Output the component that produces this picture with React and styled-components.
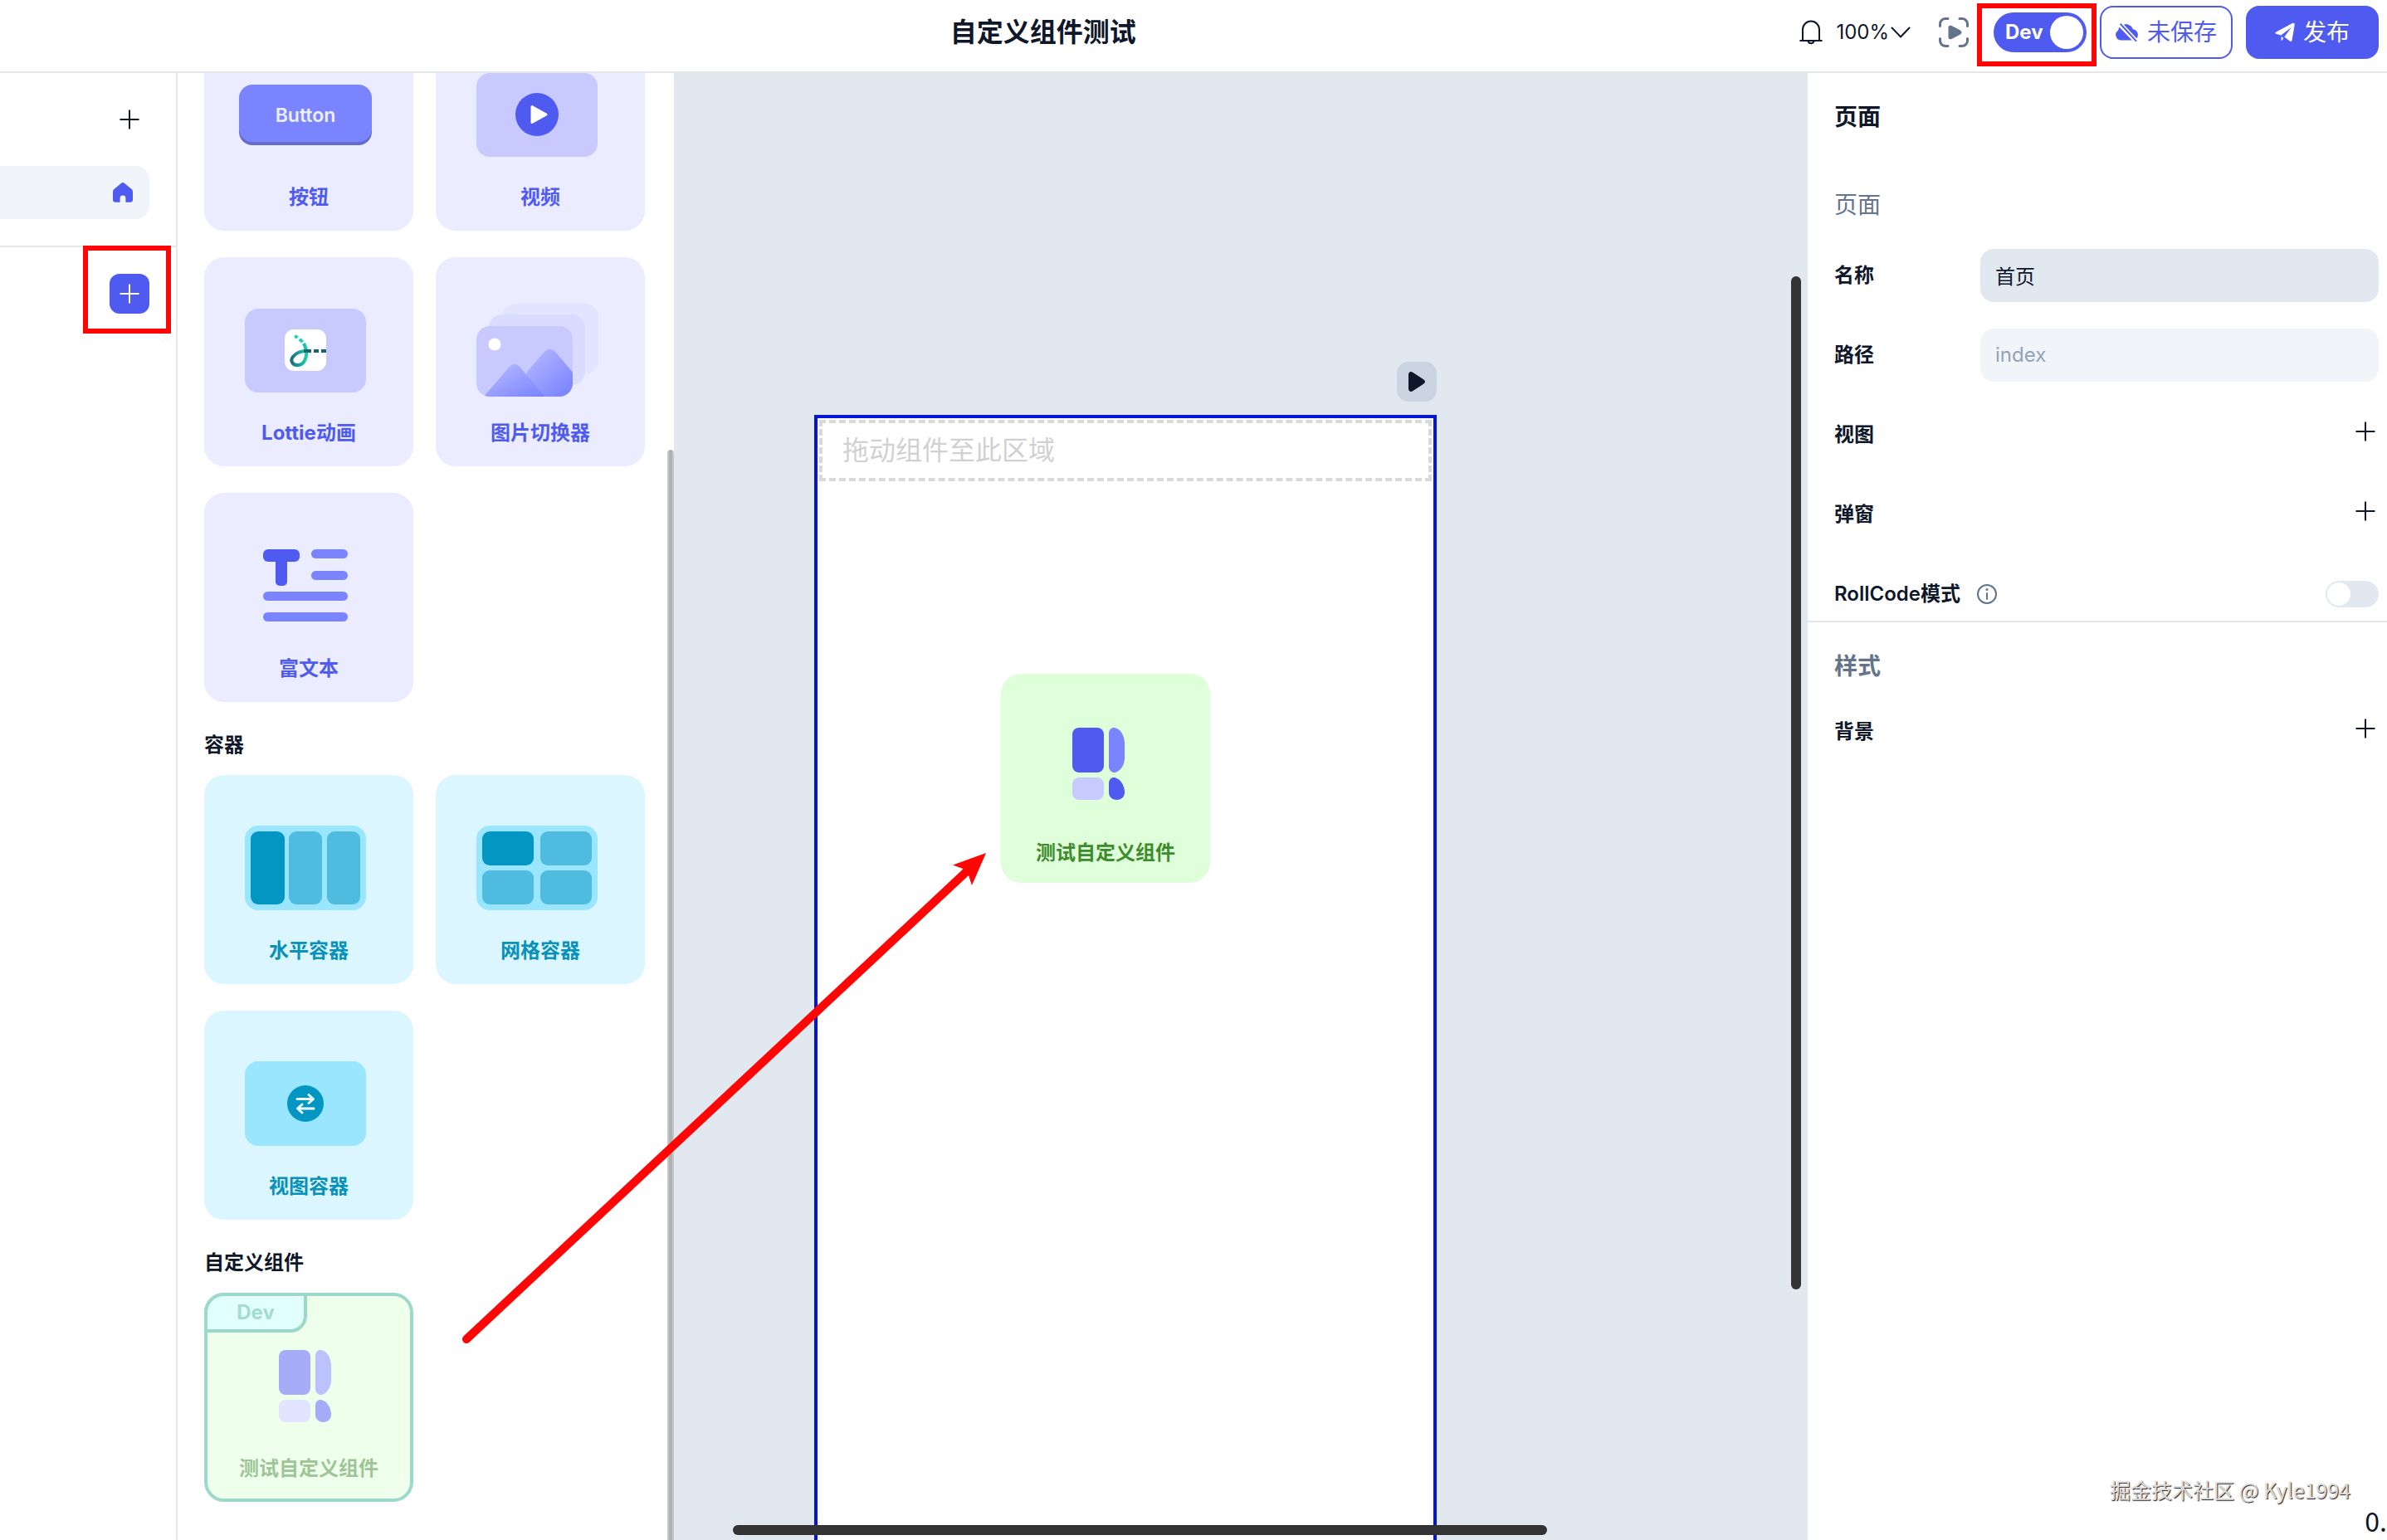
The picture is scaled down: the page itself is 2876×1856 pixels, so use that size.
import React, { useState } from "react";
import styled, { createGlobalStyle, css } from "styled-components";

const GlobalStyle = createGlobalStyle`
  *, *::before, *::after {
    box-sizing: border-box;
  }

  body {
    margin: 0;
    color: #0f172a;
    background: #fff;
    font-family: Inter, "Noto Sans CJK SC", sans-serif;
    font-size: 24px;
    line-height: 32px;
  }

  button, input {
    margin: 0;
    padding: 0;
    border: 0;
    color: inherit;
    font: inherit;
  }

  button {
    cursor: pointer;
  }

  h1, h2, h3 {
    margin: 0;
  }

  svg {
    display: block;
    flex: none;
  }
`;

const tones = {
  basic: { background: "#ebecff", color: "#4f5bf0" },
  container: { background: "#dbf6fe", color: "#0891b9" },
  custom: { background: "#dfffda", color: "#3e8c2e" },
};

/* ---------- icons ---------- */

const PlusIcon = () => (
  <svg width="24" height="24" viewBox="0 0 24 24" stroke="currentColor" strokeWidth="2" aria-hidden="true">
    <path d="M12 0.5V23.5M0.5 12H23.5" />
  </svg>
);

const HomeIcon = () => (
  <svg width="24" height="24" viewBox="0 0 24 24" fill="currentColor" aria-hidden="true">
    <path d="M10.2 0.8a2.8 2.8 0 0 1 3.6 0l8.800 7.300A3.600 3.600 0 0 1 24 10.900V20.500a3.200 3.200 0 0 1-3.200 3.200H15.400V18.800a3.400 3.400 0 0 0-6.800 0v4.900H3.200A3.200 3.200 0 0 1 0 20.500V10.900a3.600 3.600 0 0 1 1.400-2.800z" />
  </svg>
);

const BellIcon = () => (
  <svg width="28" height="30" viewBox="0 0 28 30" fill="none" stroke="currentColor" strokeWidth="2" strokeLinecap="round" aria-hidden="true">
    <path d="M1.200 25H26.800M4 25V11.500a10 10 0 0 1 20 0V25M10.500 25.500a3.600 3.600 0 0 0 7 0" />
  </svg>
);

const ChevronIcon = () => (
  <svg width="24" height="14" viewBox="0 0 24 14" fill="none" stroke="currentColor" strokeWidth="2" strokeLinecap="round" strokeLinejoin="round" aria-hidden="true">
    <path d="M1.500 1.500L12 12.500L22.500 1.500" />
  </svg>
);

const ScanIcon = () => (
  <svg width="36" height="36" viewBox="0 0 36 36" fill="none" stroke="#64748b" strokeWidth="3" strokeLinecap="round" aria-hidden="true">
    <path d="M1.500 10.500V8a6.500 6.500 0 0 1 6.500-6.500H11M25 1.500H28A6.500 6.500 0 0 1 34.500 8V10.500M34.500 25.500V28A6.500 6.500 0 0 1 28 34.500H25M11 34.500H8A6.500 6.500 0 0 1 1.500 28V25.500" />
    <path d="M12.500 12.500Q12.500 10 15 11L25.500 16.500Q27.500 18 25.500 19.500L15 25Q12.500 26 12.500 23.500Z" fill="#64748b" strokeWidth="2" strokeLinejoin="round" />
  </svg>
);

const CloudOffIcon = () => (
  <svg width="28" height="24" viewBox="0 0 28 24" fill="currentColor" aria-hidden="true">
    <path d="M4.600 5.800L19.800 21.500H7.200A6.600 6.600 0 0 1 3.200 9.400A9 9 0 0 1 4.600 5.800Z" />
    <path d="M7.800 3.400A8.800 8.800 0 0 1 20.800 8.200A6.800 6.800 0 0 1 25 19.600Z" />
    <path d="M6.200 2.200L24.500 22" fill="none" stroke="currentColor" strokeWidth="2" strokeLinecap="round" />
    <path d="M7.600 1.200L26 21" fill="none" stroke="#fff" strokeWidth="1.500" />
  </svg>
);

const PlaneIcon = () => (
  <svg width="24" height="24" viewBox="0 0 24 24" fill="currentColor" aria-hidden="true">
    <path d="M1 11.800L21 1.100C22.600 0.300 24 1.200 23.700 2.900L20.600 21.300C20.300 23 19.200 23.400 17.900 22.400L11.300 17.600L20 5.800L7.400 15.600L1.200 13.700C0 13.300 0 12.400 1 11.800Z" />
    <path d="M7.600 16.900L10.300 18.900L8.600 21.600C8 22.300 7.600 22 7.600 21.200Z" />
  </svg>
);

const InfoIcon = () => (
  <svg width="24" height="24" viewBox="0 0 24 24" fill="none" stroke="#64748b" strokeWidth="2" strokeLinecap="round" aria-hidden="true">
    <circle cx="12" cy="12" r="11" />
    <path d="M12 11V18" />
    <circle cx="12" cy="6.500" r="0.600" />
  </svg>
);

const PlayIcon = () => (
  <svg width="22" height="26" viewBox="0 0 22 26" fill="currentColor" aria-hidden="true">
    <path d="M1 5C1 1.500 3.500 0 6.500 2L19.500 10.500Q22.500 13 19.500 15.500L6.500 24C3.500 26 1 24.500 1 21Z" />
  </svg>
);

/* ---------- component illustrations ---------- */

const Art = ({ children }) => (
  <svg width="168" height="128" viewBox="0 0 168 128" aria-hidden="true">
    {children}
  </svg>
);

const ButtonArt = () => (
  <Art>
    <rect x="0" y="32" width="160" height="69" rx="16" fill="#666bcf" />
    <rect x="0" y="28" width="160" height="69" rx="16" fill="#7b84ff" />
    <text x="80" y="73" textAnchor="middle" fontFamily="Inter, sans-serif" fontSize="23" fontWeight="600" fill="#eceeff">Button</text>
  </Art>
);

const VideoArt = () => (
  <Art>
    <rect x="7" y="14" width="146" height="101" rx="16" fill="#c8caff" />
    <circle cx="80" cy="64" r="26" fill="#4f5bf0" />
    <path d="M74 54.500L91 64L74 73.500Z" fill="#fff" stroke="#fff" strokeWidth="3" strokeLinejoin="round" />
  </Art>
);

const LottieArt = () => (
  <Art>
    <defs>
      <linearGradient id="lottieLoop" x1="0" y1="0" x2="1" y2="0">
        <stop offset="0" stopColor="#1b6f80" />
        <stop offset="1" stopColor="#16d0b0" />
      </linearGradient>
    </defs>
    <rect x="7" y="14" width="146" height="101" rx="16" fill="#c8caff" />
    <rect x="55" y="39" width="50" height="50" rx="11" fill="#fff" />
    <path d="M67 47C72 49 77 54 79 58" fill="none" stroke="#1fd0b4" strokeWidth="4" strokeDasharray="4 3 5 2" />
    <path d="M79 58C84 68 80 81 72 82C65 83 61 77 65 72C69 67 74 65 81 65" fill="none" stroke="url(#lottieLoop)" strokeWidth="4" strokeLinecap="round" />
    <path d="M78 65H105" fill="none" stroke="#1b6370" strokeWidth="4" strokeDasharray="9 3 6 3" />
  </Art>
);

const CarouselArt = () => (
  <Art>
    <defs>
      <linearGradient id="hill" x1="0" y1="0" x2="1" y2="1">
        <stop offset="0" stopColor="#bcc0ff" />
        <stop offset="1" stopColor="#757eff" />
      </linearGradient>
      <clipPath id="frontFrame">
        <rect x="7" y="35" width="116" height="85" rx="16" />
      </clipPath>
    </defs>
    <rect x="38" y="8" width="116" height="85" rx="16" fill="#e3e4ff" />
    <rect x="22" y="21" width="116" height="85" rx="16" fill="#d9dbff" />
    <rect x="7" y="35" width="116" height="85" rx="16" fill="#c8caff" />
    <g clipPath="url(#frontFrame)">
      <path d="M60 120L68 90L88 67Q96 59 103 67L124 92V120Z" fill="url(#hill)" />
      <path d="M14 122L46 85Q53 77 60 85L91 122Z" fill="url(#hill)" />
    </g>
    <circle cx="29" cy="57" r="7.500" fill="#fff" />
  </Art>
);

const RichTextArt = () => (
  <Art>
    <g fill="#4f5bf0">
      <rect x="29" y="20" width="44" height="15" rx="6" />
      <path d="M44 30H58V59a5 5 0 0 1-5 5h-4a5 5 0 0 1-5-5Z" />
    </g>
    <g fill="#7b84ff">
      <rect x="87" y="20" width="44" height="11" rx="5.500" />
      <rect x="87" y="46" width="44" height="11" rx="5.500" />
      <rect x="29" y="71" width="102" height="11" rx="5.500" />
      <rect x="29" y="96" width="102" height="11" rx="5.500" />
    </g>
  </Art>
);

const ColumnsArt = () => (
  <Art>
    <rect x="7" y="13" width="146" height="102" rx="16" fill="#9ae6ff" />
    <rect x="14" y="20" width="41" height="88" rx="9" fill="#0496c2" />
    <rect x="60" y="20" width="40" height="88" rx="9" fill="#4ebbdf" />
    <rect x="106" y="20" width="40" height="88" rx="9" fill="#4ebbdf" />
  </Art>
);

const GridArt = () => (
  <Art>
    <rect x="7" y="13" width="146" height="102" rx="16" fill="#9ae6ff" />
    <rect x="14" y="20" width="62" height="41" rx="9" fill="#0496c2" />
    <rect x="84" y="20" width="62" height="41" rx="9" fill="#4ebbdf" />
    <rect x="14" y="67" width="62" height="41" rx="9" fill="#4ebbdf" />
    <rect x="84" y="67" width="62" height="41" rx="9" fill="#4ebbdf" />
  </Art>
);

const ViewArt = () => (
  <Art>
    <rect x="7" y="13" width="146" height="102" rx="16" fill="#9ae6ff" />
    <circle cx="80" cy="64" r="22" fill="#0496c2" />
    <path d="M70 58.500H89M84 53.500L89.500 58.500L84 63.500M90 70H71M76 65L70.500 70L76 75" fill="none" stroke="#e9fbff" strokeWidth="3" strokeLinecap="round" strokeLinejoin="round" />
  </Art>
);

const CustomArt = ({ width = 168 }) => (
  <svg width={width} height="128" viewBox={`0 0 ${width} 128`} aria-hidden="true">
    <rect x="48" y="21" width="38" height="54" rx="8" fill="#4f5bf0" />
    <rect x="48" y="81" width="38" height="27" rx="8" fill="#c8caff" />
    <path d="M92 28C92 23 95.500 20.500 99 21C107 22.500 111 32 111 41V57C111 66 106 73.500 99.500 75C95.500 75.500 92 72 92 68Z" fill="#7b84ff" />
    <path d="M92 88C92 83 95.500 80.500 99 81C106 82.500 111 91 111 98.500C111 104.500 107 108 101.500 108C96 108 92 104.500 92 99Z" fill="#4f5bf0" />
  </svg>
);

const basicItems = [
  { name: "按钮", art: ButtonArt },
  { name: "视频", art: VideoArt },
  { name: "Lottie动画", art: LottieArt },
  { name: "图片切换器", art: CarouselArt },
  { name: "富文本", art: RichTextArt },
];

const containerItems = [
  { name: "水平容器", art: ColumnsArt },
  { name: "网格容器", art: GridArt },
  { name: "视图容器", art: ViewArt },
];

const ComponentCard = ({ item, tone }) => {
  const Illustration = item.art;

  return (
    <Card type="button" $tone={tone}>
      <Illustration />
      <span>{item.name}</span>
    </Card>
  );
};

const TopBar = () => {
  const [dev, setDev] = useState(true);

  return (
    <Header>
      <Title>自定义组件测试</Title>
      <Actions>
        <PlainButton type="button" aria-label="通知">
          <BellIcon />
        </PlainButton>
        <ZoomButton type="button">
          100%
          <ChevronIcon />
        </ZoomButton>
        <PlainButton type="button" aria-label="预览">
          <ScanIcon />
        </PlainButton>
        <DevSwitch $on={dev}>
          <HiddenCheck type="checkbox" checked={dev} onChange={() => setDev(!dev)} />
          <span>Dev</span>
          <Knob />
        </DevSwitch>
        <ActionButton type="button">
          <CloudOffIcon />
          未保存
        </ActionButton>
        <ActionButton type="button" $primary>
          <PlaneIcon />
          发布
        </ActionButton>
      </Actions>
    </Header>
  );
};

const PageList = () => (
  <Rail>
    <RailSection $divided>
      <IconButton type="button" aria-label="新增页面">
        <PlusIcon />
      </IconButton>
      <HomeRow type="button" aria-label="首页">
        <HomeIcon />
      </HomeRow>
    </RailSection>
    <RailSection>
      <IconButton type="button" $primary aria-label="新增组件">
        <PlusIcon />
      </IconButton>
    </RailSection>
  </Rail>
);

const Library = () => (
  <LibraryPanel>
    <LibraryContent>
      <CardGrid>
        {basicItems.map((item) => (
          <ComponentCard key={item.name} item={item} tone="basic" />
        ))}
      </CardGrid>
      <GroupTitle>容器</GroupTitle>
      <CardGrid>
        {containerItems.map((item) => (
          <ComponentCard key={item.name} item={item} tone="container" />
        ))}
      </CardGrid>
      <GroupTitle>自定义组件</GroupTitle>
      <CardGrid>
        <Card type="button" $tone="custom" $dragging>
          <DevTag>Dev</DevTag>
          <CustomArt />
          <span>测试自定义组件</span>
        </Card>
      </CardGrid>
    </LibraryContent>
    <LibraryThumb />
  </LibraryPanel>
);

const Canvas = () => (
  <Workspace>
    <Artboard>
      <DropZone>拖动组件至此区域</DropZone>
    </Artboard>
    <RunButton type="button" aria-label="运行">
      <PlayIcon />
    </RunButton>
    <Dragged $tone="custom">
      <CustomArt width={176} />
      <span>测试自定义组件</span>
    </Dragged>
    <VerticalThumb />
    <HorizontalThumb />
  </Workspace>
);

const AddRow = ({ label }) => (
  <Row>
    <RowLabel as="span">{label}</RowLabel>
    <AddButton type="button" aria-label={`添加${label}`}>
      <PlusIcon />
    </AddButton>
  </Row>
);

const Settings = () => {
  const [name, setName] = useState("首页");
  const [rollCode, setRollCode] = useState(false);

  return (
    <SettingsPanel>
      <SettingsSection>
        <PanelTitle>页面</PanelTitle>
        <SectionTitle>页面</SectionTitle>
        <Rows>
          <Row>
            <RowLabel htmlFor="page-name">名称</RowLabel>
            <TextField id="page-name" value={name} onChange={(e) => setName(e.target.value)} />
          </Row>
          <Row>
            <RowLabel htmlFor="page-path">路径</RowLabel>
            <TextField id="page-path" value="index" disabled readOnly />
          </Row>
          <AddRow label="视图" />
          <AddRow label="弹窗" />
          <Row>
            <RowLabel htmlFor="roll-code">
              RollCode模式
              <InfoIcon />
            </RowLabel>
            <Toggle
              id="roll-code"
              type="checkbox"
              checked={rollCode}
              onChange={() => setRollCode(!rollCode)}
            />
          </Row>
        </Rows>
      </SettingsSection>
      <SettingsSection>
        <SectionTitle $strong>样式</SectionTitle>
        <Rows>
          <AddRow label="背景" />
        </Rows>
      </SettingsSection>
    </SettingsPanel>
  );
};

const App = () => (
  <Page>
    <GlobalStyle />
    <TopBar />
    <Body>
      <PageList />
      <Library />
      <Canvas />
      <Settings />
    </Body>
    <Highlight $left={100} $top={296} $width={106} $height={106} />
    <Highlight $left={2382} $top={4} $width={144} $height={76} />
    <Arrow width="640" height="610" viewBox="0 0 640 610" aria-hidden="true">
      <path d="M12 596L615 32" stroke="#ff0505" strokeWidth="10" strokeLinecap="round" />
      <path d="M638 10L598 24.500L610 29L617 37L621 49Z" fill="#ff0505" />
    </Arrow>
    <Watermark>掘金技术社区 @ Kyle1994</Watermark>
    <Counter>0.</Counter>
  </Page>
);

export default App;

/* ---------- layout ---------- */

const Page = styled.div`
  position: relative;
  display: flex;
  flex-direction: column;
  height: 100vh;
  overflow: hidden;
`;

const Body = styled.div`
  display: flex;
  flex: 1;
  min-height: 0;
`;

/* ---------- header ---------- */

const Header = styled.header`
  display: grid;
  grid-template-columns: 13fr auto 17fr;
  align-items: center;
  height: 88px;
  padding: 0 10px 8px 0;
  border-bottom: 2px solid #e2e5ea;
`;

const Title = styled.h1`
  grid-column: 2;
  font-size: 32px;
  line-height: 40px;
`;

const Actions = styled.div`
  display: flex;
  justify-content: flex-end;
  align-items: center;
  gap: 16px;
`;

const PlainButton = styled.button`
  background: none;
`;

const ZoomButton = styled.button`
  display: flex;
  align-items: center;
  gap: 2px;
  margin-right: 18px;
  background: none;
`;

const DevSwitch = styled.label`
  display: flex;
  align-items: center;
  justify-content: space-between;
  width: 112px;
  height: 48px;
  margin-left: 14px;
  padding: 0 4px 0 14px;
  border-radius: 24px;
  background: ${({ $on }) => ($on ? "#4f5bf0" : "#94a3b8")};
  color: #fff;
  font-weight: 700;
  cursor: pointer;
`;

const HiddenCheck = styled.input`
  position: absolute;
  width: 1px;
  height: 1px;
  opacity: 0;
`;

const Knob = styled.span`
  width: 40px;
  height: 40px;
  border-radius: 50%;
  background: #fff;
`;

const ActionButton = styled.button`
  display: flex;
  justify-content: center;
  align-items: center;
  gap: 10px;
  width: 160px;
  height: 64px;
  border: 2px solid #4f5bf0;
  border-radius: 16px;
  background: ${({ $primary }) => ($primary ? "#4f5bf0" : "#fff")};
  color: ${({ $primary }) => ($primary ? "#fff" : "#4f5bf0")};
  font-size: 28px;
`;

/* ---------- left rail ---------- */

const Rail = styled.nav`
  flex: none;
  width: 214px;
  border-right: 2px solid #e5e7eb;
`;

const RailSection = styled.section`
  display: flex;
  flex-direction: column;
  align-items: flex-end;
  gap: 32px;
  padding: 32px 32px 32px 0;
  ${({ $divided }) => $divided && css`
    border-bottom: 2px solid #e5e7eb;
  `}
`;

const IconButton = styled.button`
  display: grid;
  place-items: center;
  width: 48px;
  height: 48px;
  border-radius: 12px;
  background: ${({ $primary }) => ($primary ? "#4f5bf0" : "none")};
  color: ${({ $primary }) => ($primary ? "#fff" : "#0f172a")};
`;

const HomeRow = styled.button`
  display: flex;
  justify-content: flex-end;
  align-items: center;
  width: 100%;
  height: 64px;
  padding-right: 20px;
  border-radius: 0 16px 16px 0;
  background: #f1f5f9;
  color: #4f5bf0;
`;

/* ---------- component library ---------- */

const LibraryPanel = styled.aside`
  position: relative;
  flex: none;
  width: 598px;
  overflow: hidden;
`;

/* the list stands scrolled a little way down */
const LibraryContent = styled.div`
  margin-top: -62px;
  padding: 0 32px;
`;

const LibraryThumb = styled.div`
  position: absolute;
  top: 454px;
  right: 0;
  bottom: 0;
  width: 8px;
  border: solid #c6c7c8;
  border-width: 0 2px;
  border-radius: 4px 4px 0 0;
  background: #b0b1b1;
`;

const CardGrid = styled.div`
  display: grid;
  grid-template-columns: 252px 252px;
  gap: 32px 27px;
`;

const GroupTitle = styled.h3`
  padding: 32px 0 16px;
  font-size: 24px;
  line-height: 40px;
`;

const cardStyles = css`
  display: flex;
  flex-direction: column;
  align-items: center;
  gap: 20px;
  width: 252px;
  height: 252px;
  padding-top: 48px;
  border-radius: 24px;
  background: ${({ $tone }) => tones[$tone].background};
  color: ${({ $tone }) => tones[$tone].color};
  font-weight: 700;
`;

const Card = styled.button`
  position: relative;
  ${cardStyles}
  ${({ $dragging }) => $dragging && css`
    padding-top: 44px;
    border: 4px solid #3db598;
    opacity: 0.5;
  `}
`;

const DevTag = styled.span`
  position: absolute;
  top: -4px;
  left: -4px;
  width: 124px;
  height: 48px;
  border: 4px solid #3db598;
  border-radius: 24px 0 20px 0;
  background: #c4fff8;
  color: #4bbba0;
  font-weight: 700;
  line-height: 40px;
`;

/* ---------- canvas ---------- */

const Workspace = styled.main`
  position: relative;
  flex: 1;
  min-width: 0;
  overflow: hidden;
  background: #e2e8f0;
`;

const Artboard = styled.div`
  position: absolute;
  top: 412px;
  left: 169px;
  width: 750px;
  height: 1624px;
  padding: 2px;
  border: 4px solid #0617d4;
  background: #fff;
`;

const DropZone = styled.div`
  padding: 12px 24px;
  border: 4px dashed #d9d9d9;
  color: #d1d1d1;
  font-size: 32px;
  line-height: 42px;
`;

const RunButton = styled.button`
  position: absolute;
  top: 348px;
  left: 871px;
  display: grid;
  place-items: center;
  width: 48px;
  height: 48px;
  border-radius: 14px;
  background: #cbd5e1;
`;

const Dragged = styled.div`
  ${cardStyles}
  position: absolute;
  top: 724px;
  left: 394px;
  gap: 28px;
  padding-top: 44px;
`;

const VerticalThumb = styled.div`
  position: absolute;
  top: 245px;
  right: 8px;
  width: 12px;
  height: 1221px;
  border-radius: 6px;
  background: #333;
`;

const HorizontalThumb = styled.div`
  position: absolute;
  bottom: 6px;
  left: 71px;
  width: 981px;
  height: 12px;
  border-radius: 6px;
  background: #333;
`;

/* ---------- settings ---------- */

const SettingsPanel = styled.aside`
  flex: none;
  width: 698px;
`;

const SettingsSection = styled.section`
  padding: 0 10px 0 32px;

  & + & {
    border-top: 2px solid #e5e7eb;
    padding-top: 32px;
  }
`;

const PanelTitle = styled.h2`
  padding: 32px 0 64px;
  font-size: 28px;
  line-height: 42px;
`;

const SectionTitle = styled.h3`
  color: #64748b;
  font-size: 28px;
  font-weight: ${({ $strong }) => ($strong ? 600 : 400)};
  line-height: 42px;
`;

const Rows = styled.div`
  display: flex;
  flex-direction: column;
  gap: 32px;
  padding-top: 32px;

  ${SettingsSection} + ${SettingsSection} & {
    padding-top: 26px;
  }
`;

const Row = styled.div`
  display: flex;
  justify-content: space-between;
  align-items: center;
  height: 64px;
`;

const RowLabel = styled.label`
  display: flex;
  align-items: center;
  gap: 20px;
  font-weight: 600;
`;

const TextField = styled.input`
  width: 480px;
  height: 64px;
  padding: 0 18px 2px;
  border-radius: 16px;
  outline: none;
  background: #e2e8f0;

  &:disabled {
    background: #f1f5f9;
    color: #94a3b8;
  }
`;

const AddButton = styled.button`
  display: grid;
  place-items: center;
  align-self: flex-start;
  width: 32px;
  height: 56px;
  background: none;
`;

const Toggle = styled.input`
  appearance: none;
  display: flex;
  align-items: center;
  width: 64px;
  height: 32px;
  padding: 0 2px;
  border-radius: 16px;
  background: #e2e8f0;
  cursor: pointer;

  &::before {
    content: "";
    width: 28px;
    height: 28px;
    border-radius: 50%;
    background: #fff;
  }

  &:checked {
    justify-content: flex-end;
    background: #4f5bf0;
  }
`;

/* ---------- annotations ---------- */

const Highlight = styled.div`
  position: absolute;
  top: ${({ $top }) => $top}px;
  left: ${({ $left }) => $left}px;
  width: ${({ $width }) => $width}px;
  height: ${({ $height }) => $height}px;
  border: 6px solid #ff0505;
  pointer-events: none;
`;

const Arrow = styled.svg`
  position: absolute;
  top: 1018px;
  left: 550px;
  pointer-events: none;
`;

const Watermark = styled.div`
  position: absolute;
  right: 44px;
  bottom: 45px;
  color: #dcdcdc;
  font-family: "Noto Sans CJK SC", sans-serif;
  font-size: 25px;
  text-shadow: 1px 1px 1px #222;
`;

const Counter = styled.div`
  position: absolute;
  right: 0;
  bottom: 4px;
  font-family: "Noto Sans CJK SC", sans-serif;
  font-size: 32px;
  line-height: 40px;
`;
